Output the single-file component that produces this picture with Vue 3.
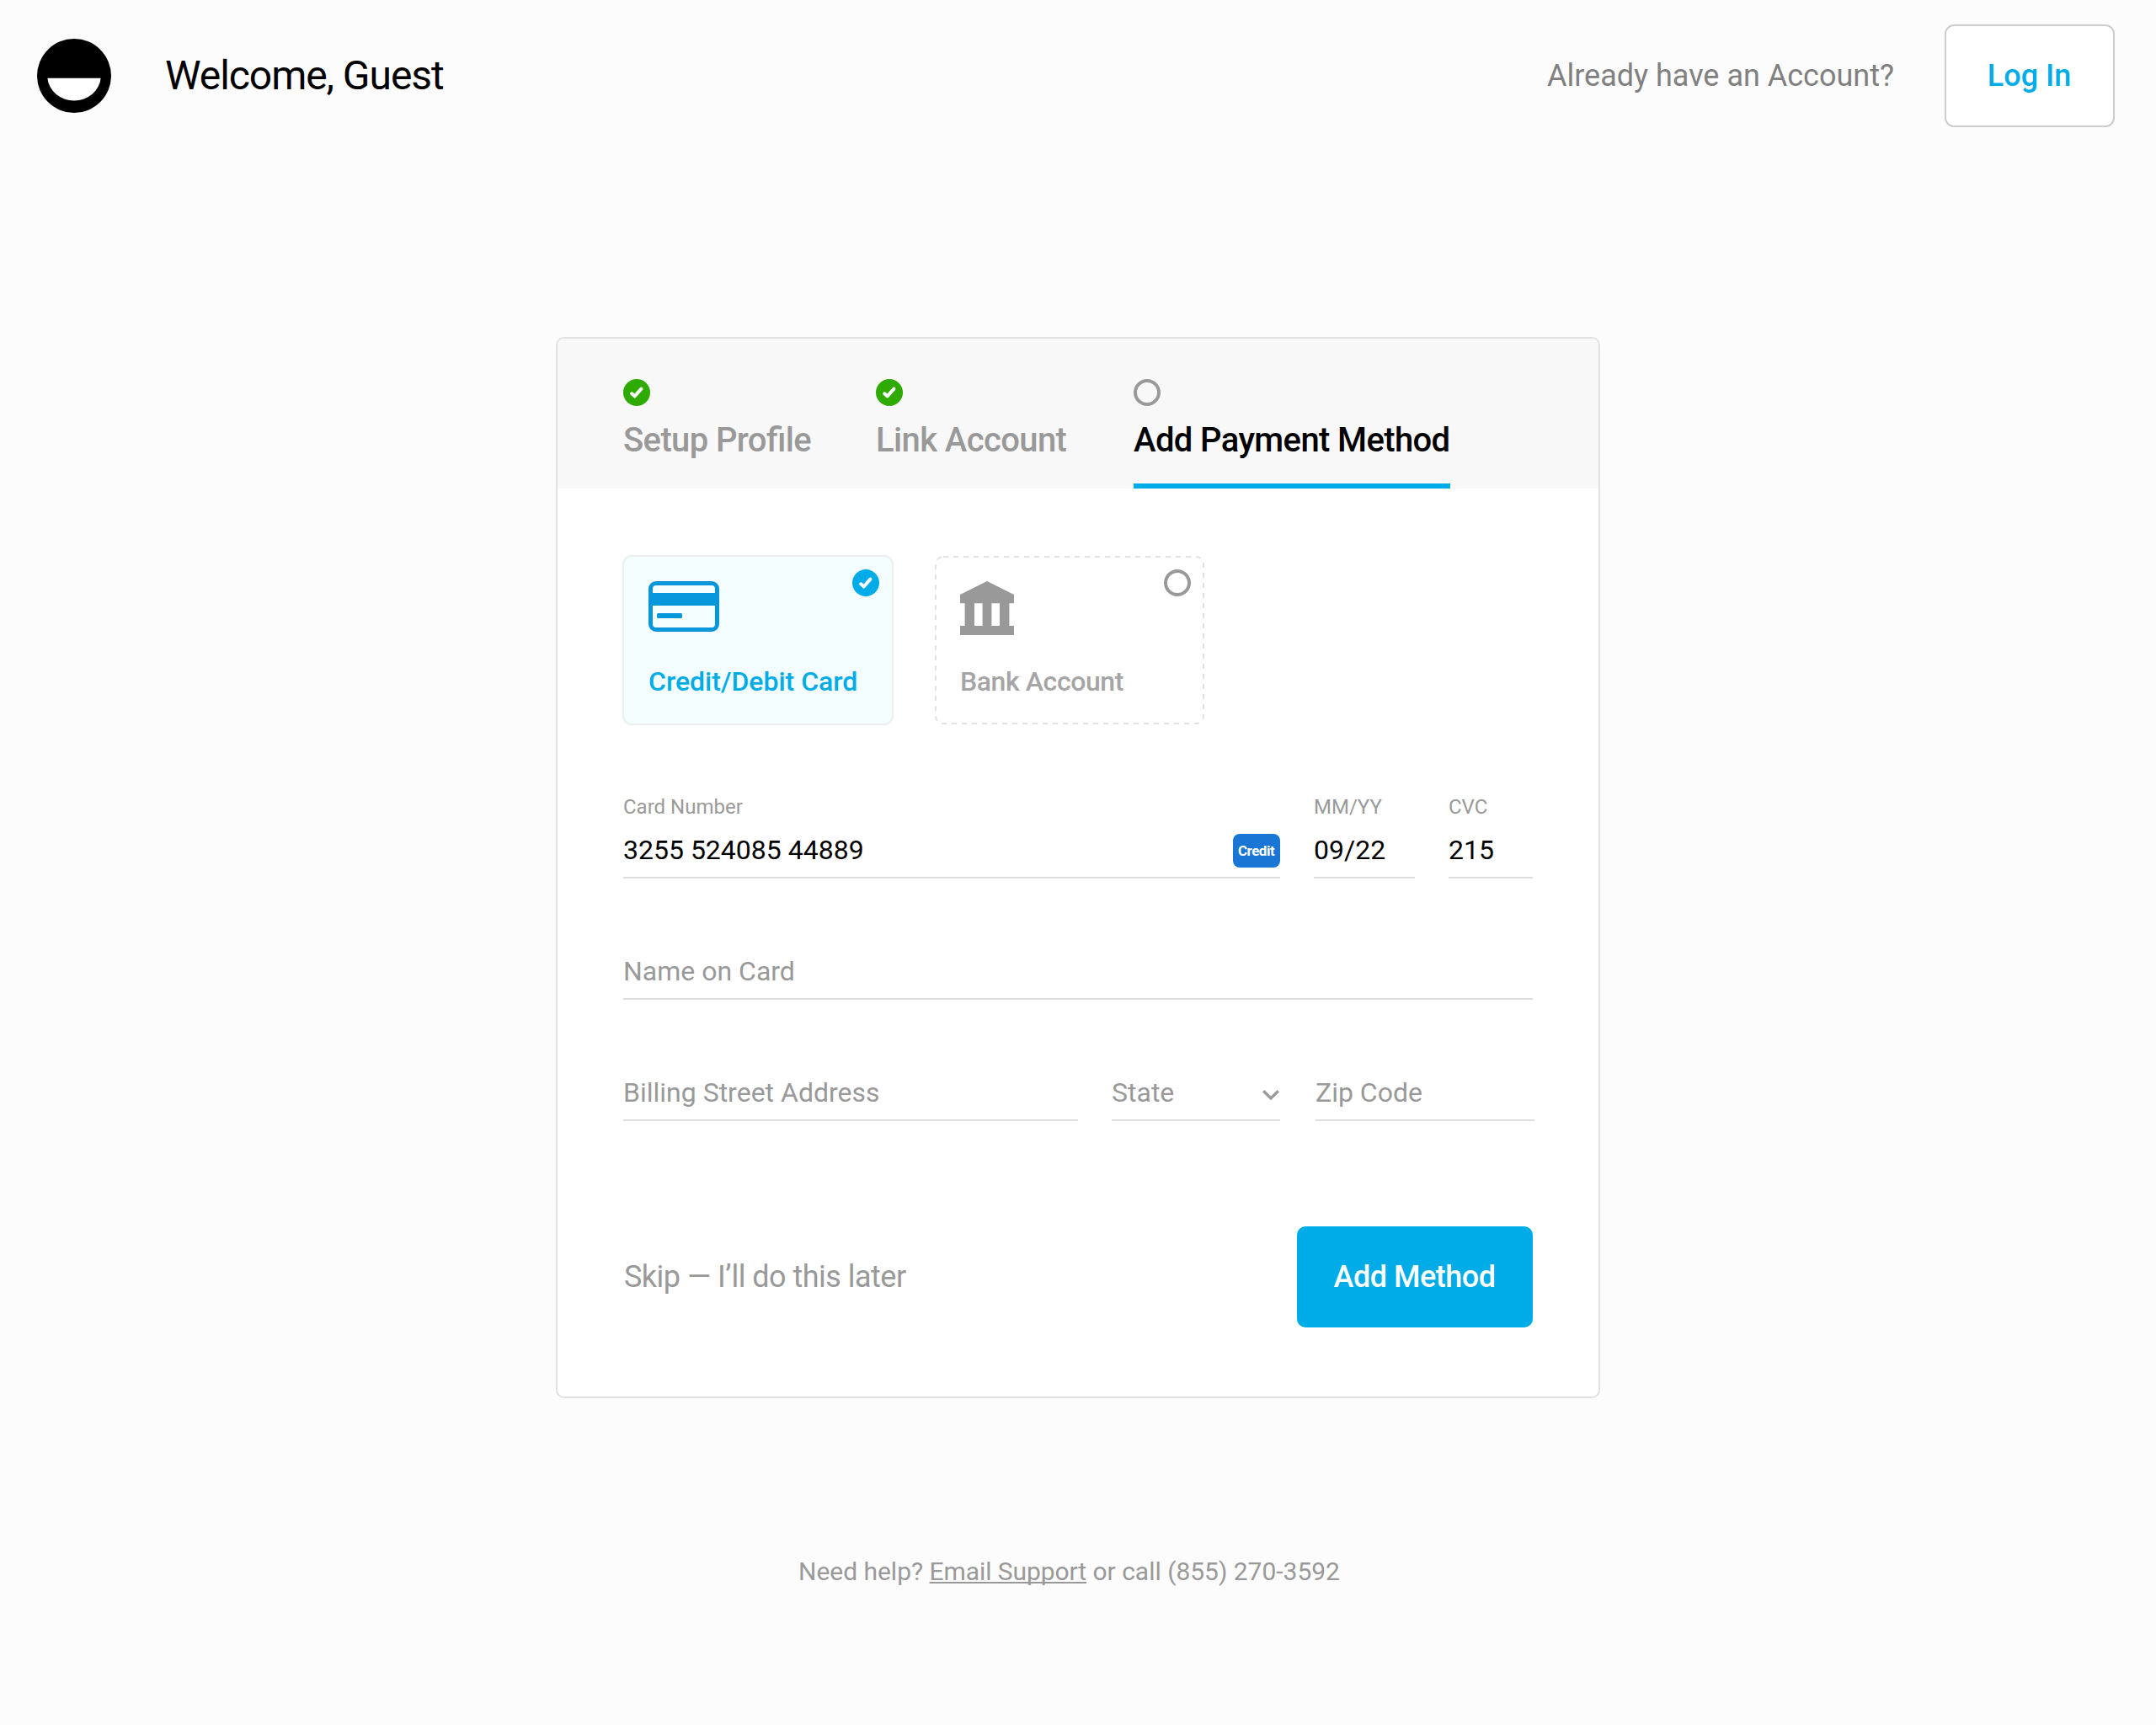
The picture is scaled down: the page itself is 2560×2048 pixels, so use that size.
<script setup>
import { reactive, ref } from 'vue'

const steps = [
  { label: 'Setup Profile', done: true },
  { label: 'Link Account', done: true },
  { label: 'Add Payment Method', done: false },
]
const method = ref('card')
const form = reactive({ number: '3255 524085 44889', expiry: '09/22', cvc: '215' })
</script>

<template>
  <div class="page">
    <header class="topbar">
      <svg class="logo" width="88" height="88" viewBox="0 0 88 88">
        <circle cx="44" cy="44" r="44" />
        <path class="logo-mouth" d="M12.4 46.7h63.2A31.7 29 0 0 1 12.4 46.7z" />
      </svg>
      <h1 class="welcome">Welcome, Guest</h1>
      <span class="have-account">Already have an Account?</span>
      <button class="login">Log In</button>
    </header>

    <main class="card">
      <nav class="steps">
        <div v-for="(step, i) in steps" :key="step.label" class="step" :class="{ current: i === 2 }">
          <svg class="badge" width="32" height="32" viewBox="0 0 32 32">
            <template v-if="step.done">
              <circle cx="16" cy="16" r="16" fill="#2eaa00" />
              <path class="tick" d="M10.2 17.3l3.5 3.1 7.7-8.8" />
            </template>
            <circle v-else class="ring" cx="16" cy="16" r="14" />
          </svg>
          <span class="step-label">{{ step.label }}</span>
        </div>
      </nav>

      <div class="body">
        <div class="methods">
          <button class="method selected" @click="method = 'card'">
            <svg width="84" height="60" viewBox="0 0 84 60">
              <rect x="2.5" y="2.5" width="79" height="55" rx="6.5" fill="none" stroke="#0596db" stroke-width="5" />
              <rect x="2" y="14" width="80" height="15" fill="#0596db" />
              <rect x="10" y="38" width="30" height="6" rx="1.5" fill="#0596db" />
            </svg>
            <span class="method-label">Credit/Debit Card</span>
            <svg class="mark" width="32" height="32" viewBox="0 0 32 32">
              <circle cx="16" cy="16" r="16" fill="#00ace8" />
              <path class="tick" d="M10.2 17.3l3.5 3.1 7.7-8.8" />
            </svg>
          </button>
          <button class="method bank" @click="method = 'bank'">
            <svg class="outline" width="320" height="200" viewBox="0 0 320 200">
              <rect x="1" y="1" width="318" height="198" rx="9" fill="none" stroke="#e1e1e1" stroke-width="2" stroke-dasharray="6 6" />
            </svg>
            <svg width="64" height="64" viewBox="0 0 64 64">
              <path fill="#999" fill-rule="evenodd" d="M32 0l32 16v10.3h-5.6v26.6H64V64H0V52.9h5.6V26.3H0V16zM17 26.3v26.6h9.6V26.3zm20.4 0v26.6H47V26.3z" />
            </svg>
            <span class="method-label">Bank Account</span>
            <svg class="mark" width="32" height="32" viewBox="0 0 32 32">
              <circle class="ring" cx="16" cy="16" r="14" />
            </svg>
          </button>
        </div>

        <div class="row labelled">
          <div class="field number">
            <label>Card Number</label>
            <div class="control">
              <span>{{ form.number }}</span>
              <span class="brand">Credit</span>
            </div>
          </div>
          <div class="field expiry">
            <label>MM/YY</label>
            <div class="control">{{ form.expiry }}</div>
          </div>
          <div class="field cvc">
            <label>CVC</label>
            <div class="control">{{ form.cvc }}</div>
          </div>
        </div>

        <div class="row">
          <div class="field name"><div class="control empty">Name on Card</div></div>
        </div>

        <div class="row">
          <div class="field street"><div class="control empty">Billing Street Address</div></div>
          <div class="field state">
            <div class="control empty">
              <span>State</span>
              <svg class="chevron" width="22" height="14" viewBox="0 0 22 14">
                <path d="M2.2 2.2L11 10.9l8.8-8.7" />
              </svg>
            </div>
          </div>
          <div class="field zip"><div class="control empty">Zip Code</div></div>
        </div>

        <div class="actions">
          <a class="skip">Skip — I’ll do this later</a>
          <button class="submit">Add Method</button>
        </div>
      </div>
    </main>

    <footer class="help">Need help? <a class="support">Email Support</a> or call (855) 270-3592</footer>
  </div>
</template>

<style>
body {
  background: #fcfcfc;
}
</style>

<style scoped>
.page,
.page * {
  box-sizing: border-box;
}
.page {
  width: 2560px;
  height: 2048px;
  overflow: hidden;
  display: flex;
  flex-direction: column;
  background: #fcfcfc;
  color: #000;
  font-family: Roboto, sans-serif;
}
button {
  font-family: inherit;
  margin: 0;
  padding: 0;
  border: 0;
  cursor: pointer;
}
svg {
  display: block;
  flex: none;
}

.topbar {
  display: flex;
  align-items: center;
  height: 180px;
  padding: 0 49px 0 44px;
}
.logo-mouth {
  fill: #fff;
}
.welcome {
  margin: 0 auto 0 64px;
  font-size: 48px;
  font-weight: 400;
  line-height: 60px;
  letter-spacing: -1.06px;
}
.have-account {
  margin-right: 60px;
  color: #808080;
  font-size: 36px;
  line-height: 44px;
}
.login {
  width: 202px;
  height: 122px;
  padding-right: 1px;
  border: 2px solid #ccc;
  border-radius: 11px;
  background: #fff;
  color: #00ace8;
  font-size: 36px;
  font-weight: 500;
}

.card {
  width: 1240px;
  height: 1260px;
  margin: 220px 0 0 660px;
  border: 2px solid #e1e1e1;
  border-radius: 10px;
  background: #fff;
  overflow: hidden;
}
.steps {
  display: grid;
  grid-template-columns: 300px 306px 376px;
  height: 178px;
  padding: 48px 0 0 78px;
  background: #f8f8f8;
}
.step {
  display: flex;
  flex-direction: column;
  gap: 17px;
  color: #999;
}
.step.current {
  color: #000;
  border-bottom: 6px solid #00ace8;
}
.step-label {
  font-size: 40px;
  font-weight: 500;
  line-height: 48px;
  letter-spacing: -0.62px;
  white-space: nowrap;
  font-feature-settings: 'liga' 1;
}
.tick {
  fill: none;
  stroke: #fff;
  stroke-width: 4;
  stroke-linecap: round;
  stroke-linejoin: round;
}
.ring {
  fill: none;
  stroke: #999;
  stroke-width: 4;
}

.body {
  padding: 79px 76px 0 77px;
}
.methods {
  display: flex;
  gap: 49px;
}
.method {
  position: relative;
  display: flex;
  flex-direction: column;
  align-items: flex-start;
  background: none;
  font-size: 32px;
  font-weight: 500;
  line-height: 40px;
  text-align: left;
}
.selected {
  width: 322px;
  height: 202px;
  padding: 29px;
  border: 2px solid #eee;
  border-radius: 11px;
  background: #f3fdff;
  color: #00ace8;
}
.selected .method-label {
  margin-top: 39px;
}
.bank {
  width: 320px;
  height: 200px;
  margin-top: 1px;
  padding: 30px;
  color: #a5a5a5;
}
.bank .method-label {
  margin-top: 35px;
  letter-spacing: -0.42px;
}
.outline {
  position: absolute;
  top: 0;
  left: 0;
}
.mark {
  position: absolute;
  top: 15px;
  right: 15px;
}
.bank .mark {
  top: 16px;
  right: 16px;
}

.row {
  display: flex;
  margin: 90px 0 0 1px;
}
.row.labelled {
  margin-top: 83px;
}
.field label {
  display: block;
  height: 28px;
  margin-bottom: 17px;
  color: #999;
  font-size: 24px;
  line-height: 28px;
}
.control {
  display: flex;
  align-items: center;
  justify-content: space-between;
  height: 54px;
  padding-bottom: 12px;
  border-bottom: 2px solid #ddd;
  font-size: 32px;
  line-height: 40px;
  white-space: nowrap;
}
.control.empty {
  color: #999;
}
.number {
  width: 780px;
}
.expiry {
  width: 120px;
  margin-left: 40px;
}
.cvc {
  width: 100px;
  margin-left: 40px;
}
.name {
  width: 1080px;
}
.street {
  width: 540px;
}
.state {
  width: 200px;
  margin-left: 40px;
}
.zip {
  width: 260px;
  margin-left: 42px;
}
.brand {
  width: 56px;
  height: 40px;
  margin-top: 2px;
  padding-left: 6px;
  border-radius: 8px;
  background: #1976d5;
  color: #fff;
  font-size: 17px;
  font-weight: 700;
  line-height: 41px;
  letter-spacing: -0.5px;
}
.chevron {
  margin: 6px 0 0 0;
}
.chevron path {
  fill: none;
  stroke: #999;
  stroke-width: 3.4;
}

.actions {
  display: flex;
  align-items: center;
  justify-content: space-between;
  margin: 125px 2px 0 2px;
}
.skip {
  color: #999;
  font-size: 36px;
  line-height: 44px;
  letter-spacing: -0.52px;
}
.submit {
  width: 280px;
  height: 120px;
  padding-right: 1px;
  border-radius: 10px;
  background: #00ace8;
  color: #fff;
  font-size: 36px;
  font-weight: 500;
  letter-spacing: -0.5px;
}

.help {
  margin: 188px 0 0 948px;
  color: #999;
  font-size: 30px;
  line-height: 36px;
  letter-spacing: -0.02px;
  white-space: nowrap;
}
.support {
  letter-spacing: -0.08px;
  text-decoration: underline;
  text-decoration-thickness: 2px;
  text-underline-offset: 2px;
  text-decoration-skip-ink: none;
}
</style>
